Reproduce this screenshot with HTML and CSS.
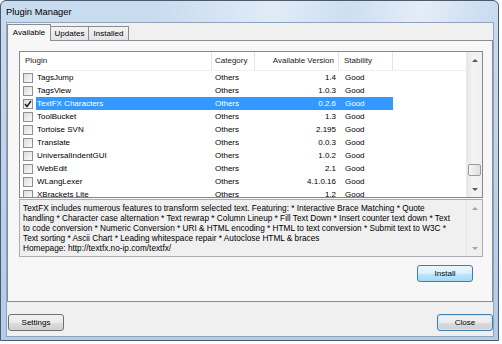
FILE: index.html
```html
<!DOCTYPE html>
<html lang="en">
<head>
  <meta charset="UTF-8">
  <title>Plugin Manager</title>
  <link rel="stylesheet" href="styles.css">
</head>
<body>
  <div class="window">
    <div class="titlebar">Plugin Manager</div>
    <div class="client">
      <div class="tabs">
        <div class="tab tab-available active">Available</div>
        <div class="tab tab-updates">Updates</div>
        <div class="tab tab-installed">Installed</div>
      </div>
      <div class="panel">
        <div class="list">
          <div class="list-body">
            <div class="header">
              <div class="hcell col-plugin">Plugin</div>
              <div class="hcell col-cat">Category</div>
              <div class="hcell col-ver">Available Version</div>
              <div class="hcell col-stab">Stability</div>
            </div>
            <div class="rows">
              <div class="row"><span class="check"></span><div class="cells"><span class="col-name">TagsJump</span><span class="col-cat">Others</span><span class="col-ver">1.4</span><span class="col-stab">Good</span></div></div>
              <div class="row"><span class="check"></span><div class="cells"><span class="col-name">TagsView</span><span class="col-cat">Others</span><span class="col-ver">1.0.3</span><span class="col-stab">Good</span></div></div>
              <div class="row selected"><span class="check checked"><svg width="8" height="8" viewBox="0 0 8 8"><path d="M1 4 L3 6.5 L7 1" fill="none" stroke="#1c1c1c" stroke-width="1.4"/></svg></span><div class="cells"><span class="col-name">TextFX Characters</span><span class="col-cat">Others</span><span class="col-ver">0.2.6</span><span class="col-stab">Good</span></div></div>
              <div class="row"><span class="check"></span><div class="cells"><span class="col-name">ToolBucket</span><span class="col-cat">Others</span><span class="col-ver">1.3</span><span class="col-stab">Good</span></div></div>
              <div class="row"><span class="check"></span><div class="cells"><span class="col-name">Tortoise SVN</span><span class="col-cat">Others</span><span class="col-ver">2.195</span><span class="col-stab">Good</span></div></div>
              <div class="row"><span class="check"></span><div class="cells"><span class="col-name">Translate</span><span class="col-cat">Others</span><span class="col-ver">0.0.3</span><span class="col-stab">Good</span></div></div>
              <div class="row"><span class="check"></span><div class="cells"><span class="col-name">UniversalIndentGUI</span><span class="col-cat">Others</span><span class="col-ver">1.0.2</span><span class="col-stab">Good</span></div></div>
              <div class="row"><span class="check"></span><div class="cells"><span class="col-name">WebEdit</span><span class="col-cat">Others</span><span class="col-ver">2.1</span><span class="col-stab">Good</span></div></div>
              <div class="row"><span class="check"></span><div class="cells"><span class="col-name">WLangLexer</span><span class="col-cat">Others</span><span class="col-ver">4.1.0.16</span><span class="col-stab">Good</span></div></div>
              <div class="row"><span class="check"></span><div class="cells"><span class="col-name">XBrackets Lite</span><span class="col-cat">Others</span><span class="col-ver">1.2</span><span class="col-stab">Good</span></div></div>
            </div>
          </div>
          <div class="scrollbar">
            <div class="sb-btn"><span class="arrow-up"></span></div>
            <div class="sb-track"><div class="sb-thumb"></div></div>
            <div class="sb-btn"><span class="arrow-down"></span></div>
          </div>
        </div>
        <div class="desc">
          <div class="desc-text">TextFX includes numerous features to transform selected text. Featuring: * Interactive Brace Matching * Quote<br>handling * Character case alternation * Text rewrap * Column Lineup * Fill Text Down * Insert counter text down * Text<br>to code conversion * Numeric Conversion * URI &amp; HTML encoding * HTML to text conversion * Submit text to W3C *<br>Text sorting * Ascii Chart * Leading whitespace repair * Autoclose HTML &amp; braces<br>Homepage: http://textfx.no-ip.com/textfx/</div>
          <div class="scrollbar disabled">
            <div class="sb-btn"><span class="arrow-up"></span></div>
            <div class="sb-track"></div>
            <div class="sb-btn"><span class="arrow-down"></span></div>
          </div>
        </div>
        <div class="install-row">
          <button class="btn btn-hot">Install</button>
        </div>
      </div>
      <div class="footer">
        <button class="btn">Settings</button>
        <button class="btn btn-default">Close</button>
      </div>
    </div>
  </div>
</body>
</html>
```

FILE: styles.css
```css
* {
  margin: 0;
  padding: 0;
  box-sizing: border-box;
}
body {
  background: #fff;
  font-family: "Liberation Sans", Arial, sans-serif;
  font-size: 8px;
  color: #000;
}
.window {
  width: 499px;
  height: 341px;
  border: 1px solid #4b5a6c;
  border-radius: 6px 6px 0 0;
  background: linear-gradient(to bottom, #c9dcf0 0%, #bad1ea 60%, #b4cce7 100%);
  padding: 0 4px 3px 5px;
  display: flex;
  flex-direction: column;
}
.titlebar {
  height: 21px;
  line-height: 22px;
  font-size: 9.4px;
  background: linear-gradient(100deg, rgba(255,255,255,0) 30%, rgba(255,255,255,0.45) 55%, rgba(255,255,255,0.1) 70%, rgba(255,255,255,0.5) 85%, rgba(255,255,255,0) 100%);
}
.client {
  height: 315px;
  background: #f0f0f0;
  border: 1px solid #8fa5be;
  padding-top: 1px;
  display: flex;
  flex-direction: column;
}

/* tabs */
.tabs {
  display: flex;
  align-items: flex-end;
  height: 17px;
}
.tab {
  height: 15px;
  line-height: 14px;
  text-align: center;
  border: 1px solid #898c95;
  border-bottom: none;
  background: linear-gradient(to bottom, #f3f3f3, #e3e3e3);
  margin-left: -1px;
}
.tab-available {
  width: 44px;
  margin-left: 0;
}
.tab-updates {
  width: 39px;
}
.tab-installed {
  width: 41px;
}
.tab.active {
  height: 17px;
  line-height: 15px;
  background: #f7f7f7;
  position: relative;
  z-index: 1;
}
.panel {
  height: 262px;
  margin-top: -1px;
  border: 1px solid #898c95;
  background: #f7f7f7;
  padding: 10px 9px 0 11px;
  display: flex;
  flex-direction: column;
}

/* list view */
.list {
  height: 147px;
  border: 1px solid #828790;
  background: #fff;
  display: flex;
}
.list-body {
  flex: 1;
  overflow: hidden;
}
.header {
  height: 19px;
  display: flex;
  align-items: center;
  border-bottom: 1px solid #eef0f3;
  color: #1a1a1a;
}
.hcell {
  height: 100%;
  line-height: 18px;
  border-right: 1px solid #e3e5e8;
  white-space: nowrap;
}
.col-plugin {
  width: 192px;
  padding-left: 5px;
}
.col-name {
  width: 176px;
  padding-left: 1px;
}
.col-cat {
  width: 43px;
  padding-left: 3px;
}
.col-ver {
  width: 84px;
  text-align: right;
  padding-right: 3px;
}
.col-stab {
  width: 54px;
  padding-left: 6px;
}
.hcell.col-ver {
  padding-right: 4px;
}
.hcell.col-stab {
  padding-left: 5px;
}
.row {
  height: 13px;
  display: flex;
  align-items: center;
}
.check {
  width: 10px;
  height: 10px;
  margin: 0 3px 0 3px;
  border: 1px solid #8e8f8f;
  background: linear-gradient(135deg, #dcdcdc, #fbfbfb);
  display: flex;
  align-items: center;
  justify-content: center;
  flex-shrink: 0;
}
.cells {
  display: flex;
  height: 13px;
  line-height: 13px;
  white-space: nowrap;
}
.cells span {
  display: block;
  overflow: hidden;
}
.row.selected .cells {
  background: #3399ff;
  color: #fff;
}

/* scrollbars */
.scrollbar {
  width: 16px;
  display: flex;
  flex-direction: column;
  background: linear-gradient(to right, #e6e6e6, #f4f4f4 40%, #f0f0f0);
  border-left: 1px solid #e9e9e9;
}
.sb-btn {
  height: 16px;
  display: flex;
  align-items: center;
  justify-content: center;
}
.sb-track {
  flex: 1;
  display: flex;
  flex-direction: column;
  justify-content: flex-end;
  align-items: center;
}
.sb-thumb {
  width: 13px;
  height: 12px;
  margin-bottom: 5px;
  border: 1px solid #9a9a9a;
  border-radius: 2px;
  background: linear-gradient(to right, #f3f3f3, #e0e0e0);
}
.arrow-up {
  width: 0;
  height: 0;
  border-left: 3px solid transparent;
  border-right: 3px solid transparent;
  border-bottom: 3px solid #4d5a6e;
}
.arrow-down {
  width: 0;
  height: 0;
  border-left: 3px solid transparent;
  border-right: 3px solid transparent;
  border-top: 3px solid #4d5a6e;
}
.scrollbar.disabled .arrow-up {
  border-bottom-color: #a3a3a3;
}
.scrollbar.disabled .arrow-down {
  border-top-color: #a3a3a3;
}

/* description */
.desc {
  height: 58px;
  margin-top: 1px;
  border: 1px solid #abadb3;
  background: #f0f0f0;
  display: flex;
}
.desc-text {
  flex: 1;
  padding: 4px 0 0 3px;
  font-size: 8.25px;
  line-height: 10px;
  white-space: nowrap;
  overflow: hidden;
}
.desc .scrollbar {
  background: #f0f0f0;
  border-left: 1px solid #e6e6e6;
}

/* buttons */
.install-row {
  display: flex;
  justify-content: flex-end;
  margin-top: 8px;
  padding-right: 10px;
}
.btn {
  width: 56px;
  height: 17px;
  font-family: "Liberation Sans", Arial, sans-serif;
  font-size: 8px;
  color: #000;
  border: 1px solid #707070;
  border-radius: 3px;
  background: linear-gradient(to bottom, #f2f2f2 0%, #ebebeb 50%, #dddddd 51%, #cfcfcf 100%);
}
.btn-default {
  border-color: #3c7fb1;
  box-shadow: inset 0 0 0 1px #c9eafb;
}
.btn-hot {
  border-color: #3c7fb1;
  background: linear-gradient(to bottom, #eaf6fd 0%, #d9f0fc 50%, #bee6fd 51%, #a7d9f5 100%);
}
.footer {
  display: flex;
  justify-content: space-between;
  margin-top: 12px;
  padding-left: 1px;
}
```
